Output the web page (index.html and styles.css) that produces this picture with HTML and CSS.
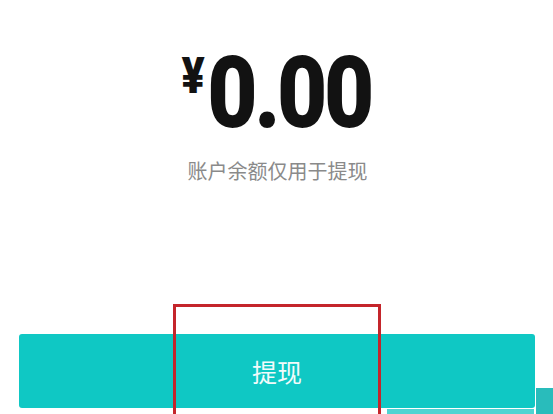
FILE: index.html
```html
<!DOCTYPE html>
<html lang="zh-CN">
<head>
<meta charset="utf-8">
<title>提现</title>
<link rel="stylesheet" href="styles.css">
</head>
<body>
<main class="page">
  <div class="amount">
    <span class="yen">¥</span><span class="value">0.00</span>
  </div>
  <p class="hint">账户余额仅用于提现</p>
  <button class="withdraw" type="button">提现</button>
</main>
<div class="highlight"></div>
<div class="strip"></div>
<div class="corner"></div>
</body>
</html>
```

FILE: styles.css
```css
html, body {
  margin: 0;
  padding: 0;
  background: #ffffff;
  overflow: hidden;
}

body {
  width: 553px;
  height: 414px;
  position: relative;
  font-family: "Noto Sans CJK SC", "Noto Sans", sans-serif;
}

.page {
  display: flex;
  flex-direction: column;
  align-items: center;
  padding-top: 42px;
}

.amount {
  display: flex;
  align-items: flex-start;
  font-family: Roboto, "Liberation Sans", sans-serif;
  font-weight: 900;
  color: #121212;
  transform: scaleX(0.86);
  transform-origin: center;
  margin-left: 0;
}

.yen {
  font-size: 50px;
  line-height: 1;
  margin-top: 9px;
  margin-right: 3px;
}

.value {
  font-size: 101px;
  line-height: 101px;
  letter-spacing: -4px;
}

.hint {
  margin: 18px 0 0;
  font-size: 20px;
  line-height: 20px;
  color: #8a8a8a;
  margin-left: 2px;
}

.withdraw {
  align-self: stretch;
  margin: 153px 18px 0 19px;
  height: 74px;
  border: none;
  border-radius: 3px;
  background: #0fc8c4;
  color: #f2fbfb;
  font-family: "Noto Sans CJK SC", "Noto Sans", sans-serif;
  font-size: 25px;
  padding: 0;
  display: flex;
  align-items: center;
  justify-content: center;
}

.highlight {
  position: absolute;
  left: 173px;
  top: 304px;
  width: 202px;
  height: 120px;
  border: 3px solid #c4252b;
}

.strip {
  position: absolute;
  left: 387px;
  top: 409px;
  width: 147px;
  height: 5px;
  background: #4fd4d2;
}

.corner {
  position: absolute;
  left: 536px;
  top: 388px;
  width: 17px;
  height: 26px;
  background: #29bcbb;
}
```
